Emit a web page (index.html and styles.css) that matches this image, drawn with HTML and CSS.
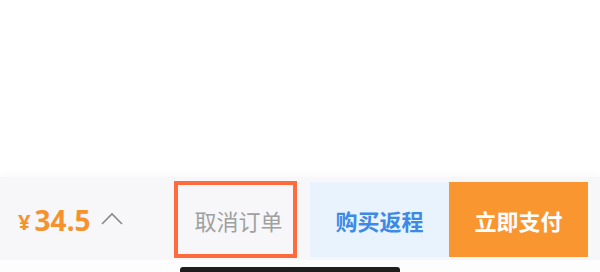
FILE: index.html
```html
<!DOCTYPE html>
<html lang="zh">
<head>
<meta charset="utf-8">
<link rel="stylesheet" href="styles.css">
</head>
<body>
<div class="page">
  <div class="content"></div>
  <div class="bar">
    <div class="price">
      <span class="yen">¥</span>
      <span class="amount">34.5</span>
      <svg class="chev" width="22" height="13" viewBox="0 0 22 13"><polyline points="1,12 11,2 21,12" fill="none" stroke="#8a8a8a" stroke-width="1.6"/></svg>
    </div>
    <div class="cancel">取消订单</div>
    <div class="btn btn-blue">购买返程</div>
    <div class="btn btn-orange">立即支付</div>
  </div>
  <div class="footer"><div class="home"></div></div>
</div>
</body>
</html>
```
FILE: styles.css
```css
html, body {
  margin: 0;
  padding: 0;
  background: #ffffff;
}
.page {
  width: 600px;
  height: 272px;
  display: flex;
  flex-direction: column;
  font-family: "Noto Sans CJK SC", "Noto Sans", sans-serif;
  overflow: hidden;
}
.content {
  flex-shrink: 0;
  height: 177px;
  background: #ffffff;
}
.bar {
  flex-shrink: 0;
  box-sizing: border-box;
  height: 83px;
  background: #f7f7f9;
  box-shadow: 0 -3px 8px rgba(0, 0, 0, 0.025);
  display: flex;
  align-items: flex-end;
  padding-left: 18px;
  padding-bottom: 2px;
}
.price {
  display: flex;
  align-items: center;
  align-self: center;
  width: 156px;
  margin-top: 4px;
  color: #f5922d;
}
.yen {
  font-family: "Noto Sans", sans-serif;
  font-size: 22px;
  font-weight: 700;
  margin-right: 4px;
  margin-top: 3px;
}
.amount {
  font-family: "Noto Sans", "Noto Sans CJK SC", sans-serif;
  font-size: 28px;
  font-weight: 700;
}
.chev {
  margin-left: 10px;
  margin-top: -3px;
}
.cancel {
  box-sizing: border-box;
  width: 123px;
  height: 77px;
  border: 4px solid #ff6b3d;
  display: flex;
  align-items: center;
  justify-content: center;
  padding-left: 6px;
  font-size: 22px;
  color: #a0a0a0;
  margin-right: 13px;
}
.btn {
  width: 139px;
  height: 75px;
  display: flex;
  align-items: center;
  justify-content: center;
  font-size: 22px;
  font-weight: 700;
  margin-bottom: 1px;
}
.btn-blue {
  background: #e8f3fe;
  color: #3d8ae6;
}
.btn-orange {
  background: #fa9630;
  color: #ffffff;
}
.footer {
  flex: 1;
  background: #fdfdfd;
  padding-top: 7px;
  padding-left: 180px;
}
.home {
  width: 220px;
  height: 8px;
  border-radius: 3px;
  background: #1e1e1e;
}
```
